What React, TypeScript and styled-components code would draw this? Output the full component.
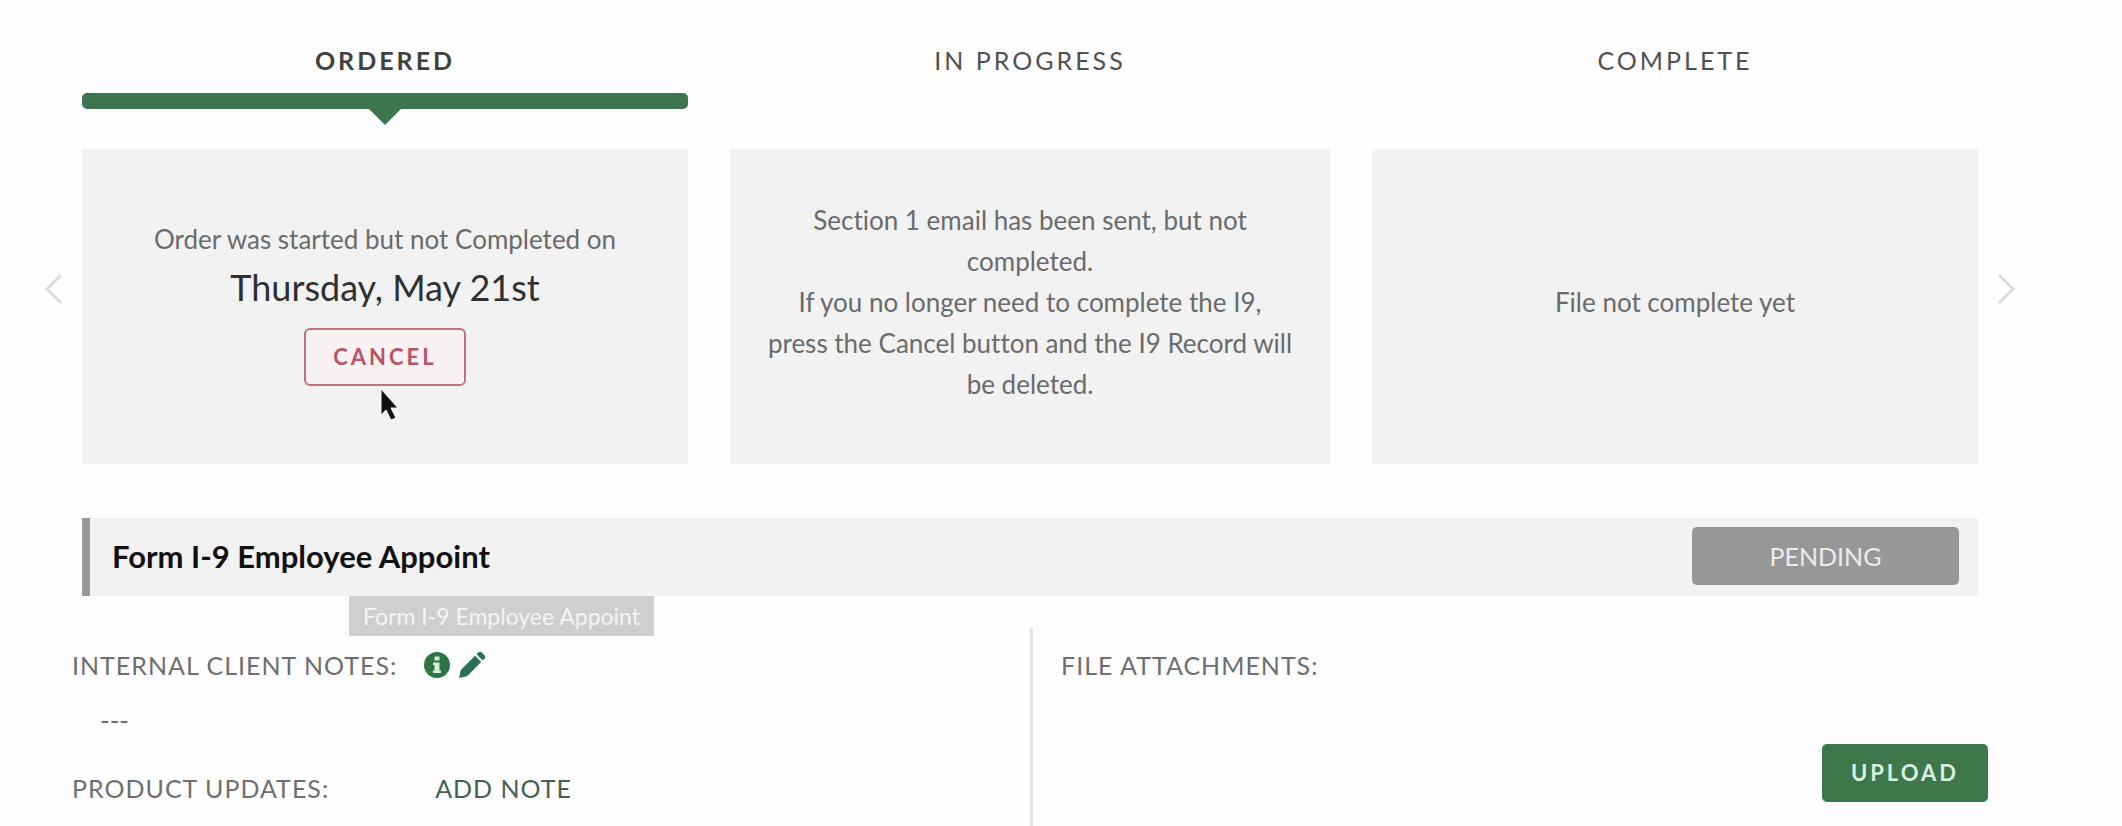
import React from "react";
import styled, { createGlobalStyle } from "styled-components";

const GlobalStyle = createGlobalStyle`
  *, *::before, *::after { box-sizing: border-box; }
  body {
    margin: 0;
    background: #fefefe;
    color: #6b6b6b;
    font-family: Lato, "Open Sans", sans-serif;
    font-size: 26px;
    line-height: 41px;
    font-variant-ligatures: none;
  }
  h2, p { margin: 0; }
  button { font-family: inherit; cursor: pointer; }
`;

const Page = styled.main`
  padding: 42px 98px 0 36px;
`;

const Carousel = styled.section`
  display: grid;
  grid-template-columns: 36px minmax(0, 1fr) 36px;
  column-gap: 10px;
`;

const Columns = styled.div`
  grid-column: 2;
  display: grid;
  grid-template-columns: 101fr 100fr 101fr;
  column-gap: 42px;
`;

const Tab = styled.button<{ $active?: boolean }>`
  display: flex;
  flex-direction: column;
  padding: 0;
  margin-bottom: 40px;
  border: 0;
  background: none;
  color: ${(p) => (p.$active ? "#404040" : "#505050")};
  font-size: 25px;
  font-weight: ${(p) => (p.$active ? 700 : 400)};
  line-height: 36px;
  letter-spacing: 3px;
  text-align: center;
`;

const TabLabel = styled.span`
  align-self: center;
`;

const TabBar = styled.span`
  position: relative;
  align-self: stretch;
  height: 16px;
  margin-top: 15px;
  border-radius: 5px;
  background: #3d764e;

  &::after {
    content: "";
    position: absolute;
    top: 100%;
    left: 50%;
    margin-left: -16px;
    border: 16px solid transparent;
    border-top-color: #3d764e;
    border-bottom: 0;
  }
`;

const Arrow = styled.button`
  grid-column: auto;
  display: flex;
  align-items: center;
  justify-content: center;
  padding: 0 0 36px;
  border: 0;
  background: none;
  color: #dcdcdc;
`;

const PreviousArrow = styled(Arrow)`
  grid-column: 1;
`;

const Card = styled.article`
  display: flex;
  flex-direction: column;
  align-items: center;
  justify-content: center;
  min-height: 315px;
  padding: 0 36px 8px;
  background: #f2f2f2;
  text-align: center;
`;

const OrderDate = styled.p`
  color: #303030;
  font-size: 36px;
  line-height: 54px;
`;

const ButtonWrap = styled.div`
  position: relative;
  margin-top: 14px;
`;

const CancelButton = styled.button`
  display: block;
  height: 58px;
  padding: 0 27px;
  border: 2px solid #bd7380;
  border-radius: 6px;
  background: #f8f2f3;
  color: #bb5266;
  font-size: 22px;
  font-weight: 700;
  line-height: 52px;
  letter-spacing: 3px;
`;

const Pointer = styled.svg`
  position: absolute;
  top: 100%;
  left: 50%;
  margin: 2px 0 0 -6px;
`;

const FormBar = styled.section`
  position: relative;
  display: flex;
  align-items: center;
  justify-content: space-between;
  min-height: 78px;
  margin: 54px 46px 0;
  padding: 0 19px 2px 22px;
  border-left: 8px solid #999999;
  background: #f2f2f2;
`;

const FormTitle = styled.h2`
  color: #111111;
  font-size: 31px;
  font-weight: 700;
  line-height: 42px;
`;

const Tooltip = styled.span`
  position: absolute;
  top: 100%;
  left: 259px;
  padding: 0 14px;
  background: #cfcfcf;
  color: #f4f4f4;
  font-size: 23px;
  line-height: 40px;
  white-space: nowrap;
`;

const Status = styled.span`
  width: 267px;
  border-radius: 5px;
  background: #979797;
  color: #ececec;
  font-size: 25px;
  line-height: 58px;
  text-align: center;
`;

const Details = styled.section`
  display: grid;
  grid-template-columns: 1fr 1fr;
  margin: 32px 36px 0;
`;

const Notes = styled.div`
  display: flex;
  flex-direction: column;
  padding-top: 16px;
`;

const Attachments = styled.div`
  display: flex;
  flex-direction: column;
  min-height: 198px;
  padding: 16px 0 24px 28px;
  border-left: 3px solid #e4e4e4;
`;

const Row = styled.div`
  display: flex;
  align-items: center;
`;

const Label = styled.h2`
  color: #6f6f6f;
  font-size: 25px;
  font-weight: 400;
  line-height: 42px;
  letter-spacing: 1px;
`;

const Icons = styled.div`
  display: flex;
  gap: 7px;
  margin-left: 26px;
`;

const IconButton = styled.button`
  display: flex;
  padding: 0;
  border: 0;
  background: none;
`;

const NoteText = styled.p`
  padding: 14px 28px 26px;
`;

const AddNote = styled.a`
  margin-left: 106px;
  color: #466056;
  font-size: 25px;
  letter-spacing: 1px;
  text-decoration: none;
`;

const UploadButton = styled.button`
  align-self: flex-end;
  height: 58px;
  margin-top: auto;
  padding: 0 29px;
  border: 0;
  border-radius: 5px;
  background: #3e774b;
  color: #d8f2df;
  font-size: 22px;
  font-weight: 700;
  line-height: 54px;
  letter-spacing: 3px;
`;

export default function App() {
  return (
    <>
      <GlobalStyle />
      <Page>
        <Carousel>
          <Columns>
            <Tab $active>
              <TabLabel>ORDERED</TabLabel>
              <TabBar />
            </Tab>
            <Tab>
              <TabLabel>IN PROGRESS</TabLabel>
            </Tab>
            <Tab>
              <TabLabel>COMPLETE</TabLabel>
            </Tab>
          </Columns>
          <PreviousArrow aria-label="Previous">
            <svg width="20" height="32" viewBox="0 0 20 32" fill="none" stroke="currentColor" strokeWidth="3">
              <path d="M17 2 3 16l14 14" />
            </svg>
          </PreviousArrow>
          <Columns>
            <Card>
              <p>Order was started but not Completed on</p>
              <OrderDate>Thursday, May 21st</OrderDate>
              <ButtonWrap>
                <CancelButton>CANCEL</CancelButton>
                <Pointer width="20" height="34" viewBox="0 0 20 34" aria-hidden="true">
                  <path
                    d="M2 1v26l5-5 5 10 5-2-5-10h7z"
                    fill="#111111"
                    stroke="#f7f7f7"
                    strokeWidth="1"
                  />
                </Pointer>
              </ButtonWrap>
            </Card>
            <Card>
              <p>
                Section 1 email has been sent, but not completed.
                <br />
                If you no longer need to complete the I9, press the Cancel button and the I9 Record will be
                deleted.
              </p>
            </Card>
            <Card>
              <p>File not complete yet</p>
            </Card>
          </Columns>
          <Arrow aria-label="Next">
            <svg width="20" height="32" viewBox="0 0 20 32" fill="none" stroke="currentColor" strokeWidth="3">
              <path d="m3 2 14 14L3 30" />
            </svg>
          </Arrow>
        </Carousel>

        <FormBar>
          <FormTitle>Form I-9 Employee Appoint</FormTitle>
          <Status>PENDING</Status>
          <Tooltip role="tooltip">Form I-9 Employee Appoint</Tooltip>
        </FormBar>

        <Details>
          <Notes>
            <Row>
              <Label>INTERNAL CLIENT NOTES:</Label>
              <Icons>
                <IconButton aria-label="About internal client notes">
                  <svg width="28" height="28" viewBox="0 0 28 28">
                    <circle cx="14" cy="14" r="13" fill="#2f7544" />
                    <path d="M11.5 5.5h5v4h-5zM10 11.5h6.5v8H18V22h-8v-2.500h1.500V14H10z" fill="#d5ecd9" />
                  </svg>
                </IconButton>
                <IconButton aria-label="Edit internal client notes">
                  <svg width="28" height="28" viewBox="0 0 28 28" fill="#2b6f55">
                    <path d="M1 27l1.800-8L17 4.800l6.200 6.200L9 25.200z" />
                    <path d="m18.500 3.300 2-2q1.500-1.200 3 0L26.700 4.500q1.200 1.500 0 3l-2 2z" />
                  </svg>
                </IconButton>
              </Icons>
            </Row>
            <NoteText>---</NoteText>
            <Row>
              <Label>PRODUCT UPDATES:</Label>
              <AddNote href="#add-note">ADD NOTE</AddNote>
            </Row>
          </Notes>
          <Attachments>
            <Label>FILE ATTACHMENTS:</Label>
            <UploadButton>UPLOAD</UploadButton>
          </Attachments>
        </Details>
      </Page>
    </>
  );
}
